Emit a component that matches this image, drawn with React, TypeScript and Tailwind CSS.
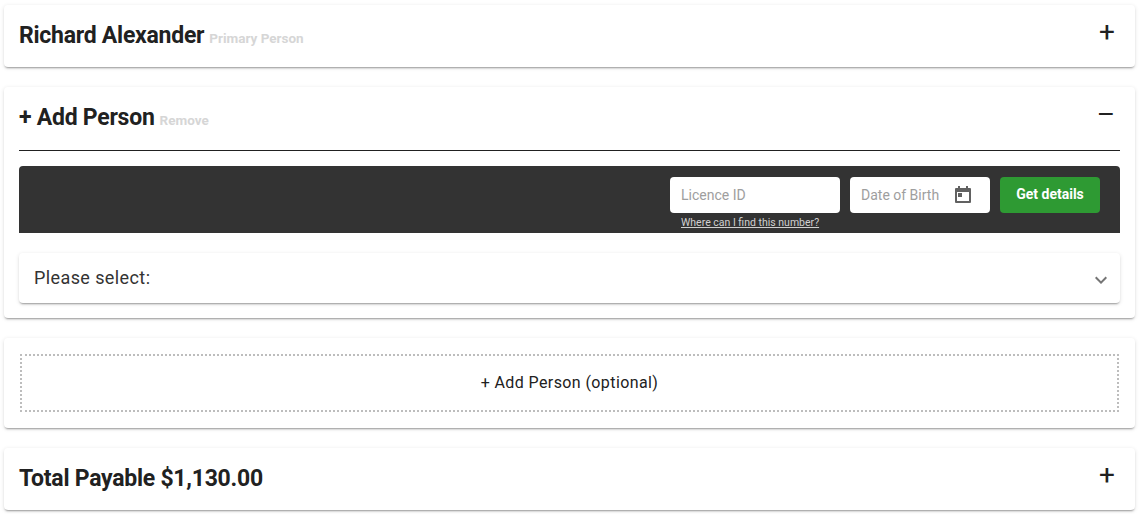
const cardClass =
  "rounded-[4px] bg-white shadow-[0_2px_2px_-1px_rgba(0,0,0,0.35),0_1px_4px_0_rgba(0,0,0,0.12)]";

function Header({
  title,
  note,
  sign,
  inset = true,
}: {
  title: string;
  note?: string;
  sign: string;
  inset?: boolean;
}) {
  return (
    <div className={`flex h-[62px] items-center justify-between ${inset ? "pl-[15px] pr-[20px]" : "pr-[5px]"}`}>
      <div className="flex items-baseline gap-[5px]">
        <span className="text-[23px] font-bold tracking-[-0.25px] leading-[28px] text-[#212121]">{title}</span>
        {note && <span className="text-[13.5px] font-bold text-[#d6d6d6]">{note}</span>}
      </div>
      <span className={`text-[28px] leading-[28px] text-[#212121] ${inset ? "mb-[8px]" : "mb-[6px]"}`}>{sign}</span>
    </div>
  );
}

export default function App() {
  return (
    <div className="flex flex-col gap-[20px] bg-white px-[4px] pt-[5px] pb-[4px] font-['Roboto',sans-serif] w-[1131px] box-content">
      <section className={cardClass}>
        <Header title="Richard Alexander" note="Primary Person" sign="+" />
      </section>

      <section className={`${cardClass} h-[231px] px-[15px]`}>
        <Header title="+ Add Person" note="Remove" sign="–" inset={false} />
        <div className="h-px bg-[#212121] mt-[1px]" />
        <div className="mt-[15px] flex h-[67px] justify-end gap-[10px] rounded-t-[4px] bg-[#333333] pt-[11px] pr-[20px]">
          <div className="w-[170px]">
            <div className="flex h-[36px] items-center rounded-[4px] bg-white px-[11px] text-[14px] text-[#9e9e9e]">
              Licence ID
            </div>
            <a className="mt-[3px] block pl-[11px] text-[10.5px] leading-[13px] text-[#d0d0d0] underline">
              Where can I find this number?
            </a>
          </div>
          <div className="flex h-[36px] w-[140px] items-center justify-between rounded-[4px] bg-white pl-[11px] pr-[16px] text-[14px] text-[#9e9e9e]">
            Date of Birth
            <svg width="24" height="24" viewBox="0 0 24 24" fill="#616161">
              <path
                fillRule="evenodd"
                d="M8 3h2v2h6V3h2v2h2a1 1 0 0 1 1 1v13a1 1 0 0 1-1 1H6a1 1 0 0 1-1-1V6a1 1 0 0 1 1-1h2zM7 9v9h12V9z"
              />
              <path d="M8 10h4v4H8z" />
            </svg>
          </div>
          <button
            type="button"
            className="h-[36px] w-[100px] rounded-[4px] bg-[#2e9a33] pb-[2px] text-[14px] font-bold text-white"
          >
            Get details
          </button>
        </div>
        <div className="mt-[20px] flex h-[50px] items-center justify-between rounded-[4px] bg-white pl-[15px] pr-[7px] shadow-[0_2px_2px_-1px_rgba(0,0,0,0.35),0_1px_4px_0_rgba(0,0,0,0.12)]">
          <span className="mb-[2px] text-[18px] tracking-[0.4px] text-[#333333]">Please select:</span>
          <svg width="24" height="24" viewBox="0 0 24 24" fill="#757575" className="mt-[4px]">
            <path d="M7.41 8.59 12 13.17l4.59-4.58L18 10l-6 6-6-6z" />
          </svg>
        </div>
      </section>

      <section className={`${cardClass} h-[90px] px-[16px] pt-[16px]`}>
        <div className="flex h-[58px] items-center justify-center border-2 border-dotted border-[#bdbdbd] text-[16px] tracking-[0.4px] text-[#212121]">
          + Add Person (optional)
        </div>
      </section>

      <section className={cardClass}>
        <Header title="Total Payable $1,130.00" sign="+" />
      </section>
    </div>
  );
}
